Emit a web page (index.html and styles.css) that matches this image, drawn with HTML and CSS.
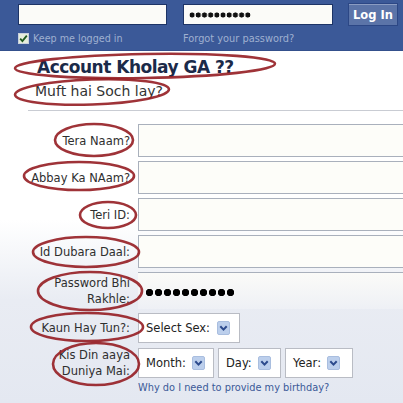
FILE: index.html
```html
<!DOCTYPE html>
<html>
<head>
<meta charset="utf-8">
<link rel="stylesheet" href="styles.css">
</head>
<body>
<div class="page">
  <header class="topbar">
    <div class="login-grid">
      <div class="box email"></div>
      <div class="box pass"><span class="dots dots-sm"></span></div>
      <button class="login-btn">Log In</button>
      <label class="keep"><span class="check"><svg width="11" height="11" viewBox="0 0 11 11"><rect x="0.5" y="0.5" width="10" height="10" fill="#e6eedc" stroke="#c8d0dc"/><path d="M2.2 5.6 L4.4 8 L8.8 2.6" fill="none" stroke="#1f5a1f" stroke-width="1.8"/></svg></span>Keep me logged in</label>
      <a class="forgot">Forgot your password?</a>
    </div>
  </header>
  <main class="signup">
    <h1 class="title">Account Kholay GA ??</h1>
    <p class="subtitle">Muft hai Soch lay?</p>
    <div class="form">
      <div class="lbl">Tera Naam?</div><div class="inp"></div>
      <div class="lbl">Abbay Ka NAam?</div><div class="inp"></div>
      <div class="lbl">Teri ID:</div><div class="inp"></div>
      <div class="lbl">Id Dubara Daal:</div><div class="inp"></div>
      <div class="lbl two">Password Bhi<br>Rakhle:</div><div class="pwd"><span class="dots dots-lg"></span></div>
      <div class="lbl">Kaun Hay Tun?:</div>
      <div class="sels"><div class="sel sex">Select Sex: <span class="arr"><svg width="13" height="14" viewBox="0 0 13 14"><rect x="0.5" y="0.5" width="12" height="13" rx="1.5" fill="#bccfec" stroke="#a9bedf"/><path d="M3.3 5.2 L6.5 8.6 L9.7 5.2" fill="none" stroke="#2c4a8c" stroke-width="2"/></svg></span></div></div>
      <div class="lbl two">Kis Din aaya<br>Duniya Mai:</div>
      <div class="sels">
        <div class="sel month">Month: <span class="arr"><svg width="13" height="14" viewBox="0 0 13 14"><rect x="0.5" y="0.5" width="12" height="13" rx="1.5" fill="#bccfec" stroke="#a9bedf"/><path d="M3.3 5.2 L6.5 8.6 L9.7 5.2" fill="none" stroke="#2c4a8c" stroke-width="2"/></svg></span></div>
        <div class="sel day">Day: <span class="arr"><svg width="13" height="14" viewBox="0 0 13 14"><rect x="0.5" y="0.5" width="12" height="13" rx="1.5" fill="#bccfec" stroke="#a9bedf"/><path d="M3.3 5.2 L6.5 8.6 L9.7 5.2" fill="none" stroke="#2c4a8c" stroke-width="2"/></svg></span></div>
        <div class="sel year">Year: <span class="arr"><svg width="13" height="14" viewBox="0 0 13 14"><rect x="0.5" y="0.5" width="12" height="13" rx="1.5" fill="#bccfec" stroke="#a9bedf"/><path d="M3.3 5.2 L6.5 8.6 L9.7 5.2" fill="none" stroke="#2c4a8c" stroke-width="2"/></svg></span></div>
      </div>
      <div></div><a class="why">Why do I need to provide my birthday?</a>
    </div>
  </main>
  <svg class="marks" width="403" height="403" viewBox="0 0 403 403">
    <g fill="none" stroke="#951d22" stroke-width="2.6" stroke-opacity="0.9">
      <ellipse cx="145" cy="66" rx="130" ry="12" transform="rotate(-1 145 66)"/>
      <ellipse cx="92" cy="92" rx="77" ry="12.5" transform="rotate(-2 92 92)"/>
      <ellipse cx="94" cy="140" rx="39" ry="16"/>
      <ellipse cx="79" cy="176" rx="55" ry="14"/>
      <ellipse cx="108" cy="215" rx="28" ry="13"/>
      <ellipse cx="86" cy="252" rx="53" ry="15"/>
      <ellipse cx="90" cy="291" rx="52" ry="19"/>
      <ellipse cx="87" cy="327" rx="56" ry="14"/>
      <ellipse cx="96" cy="364" rx="43" ry="21"/>
    </g>
  </svg>
</div>
</body>
</html>
```

FILE: styles.css
```css
* { box-sizing: border-box; }
html, body { margin: 0; padding: 0; }
body { width: 403px; height: 403px; overflow: hidden; font-family: "DejaVu Sans", Verdana, sans-serif; }
.page { position: relative; width: 403px; height: 403px; overflow: hidden; background: linear-gradient(#ffffff 0, #ffffff 220px, #e9ecf3 300px, #e4e8f1 403px); }

.topbar { height: 51px; background: #3b5998; padding: 3px 0 0 18px; border-bottom: 1px solid #34508c; }
.login-grid { display: grid; grid-template-columns: 149px 150px 50px; column-gap: 16px; row-gap: 7px; align-items: center; }
.box { height: 21px; background: #fbfbf8; border: 1px solid #1d3466; display: flex; align-items: center; padding-left: 5px; }
.login-btn { margin-left: -1px; height: 23px; width: 50px; padding: 0; background: #5b74a8; border: 1px solid #2c4785; color: #fff; font-family: "DejaVu Sans", sans-serif; font-weight: bold; font-size: 11.5px; box-shadow: inset 0 1px 0 #8a9cc2; }
.keep { display: flex; align-items: center; gap: 4px; color: #9fb0d0; font-size: 9.6px; }
.check { display: flex; }
.forgot { color: #9fb0d0; font-size: 9.8px; }

.dots { display: block; background-repeat: repeat-x; }
.dots-sm { width: 62px; height: 6px; background-image: radial-gradient(circle, #111 2.3px, transparent 2.8px); background-size: 6.2px 6px; }
.dots-lg { width: 90px; height: 9px; background-image: radial-gradient(circle, #000 3.4px, transparent 4px); background-size: 9px 9px; }

.signup { padding-top: 4px; }
.title { margin: 0 0 0 37px; font-size: 17px; line-height: 24px; font-weight: bold; color: #1b2a49; letter-spacing: -0.5px; }
.subtitle { margin: 1px 0 0 28px; font-size: 14px; line-height: 22px; color: #333; padding: 0 0 8px 7px; border-bottom: 1px solid #c9ccd3; }

.form { display: grid; grid-template-columns: 130px 1fr; column-gap: 8px; row-gap: 4px; margin-top: 13px; align-items: center; }
.lbl { text-align: right; font-size: 11.5px; color: #2f2f2f; line-height: 16px; }
.inp { height: 33px; width: 280px; background: #fdfdf9; border: 1px solid #a9b0bc; }
.pwd { height: 37px; width: 280px; border-top: 1px solid #a9b0bc; background: linear-gradient(#fbfbf8, #eef0f5); padding: 15px 0 0 7px; }
.sels { display: flex; gap: 4px; }
.sel { height: 30px; display: flex; align-items: center; gap: 6px; padding: 0 7px; background: #fff; border: 1px solid #b9bcc4; font-size: 11.5px; color: #222; white-space: nowrap; }
.sex { width: 102px; justify-content: space-between; padding-right: 9px; }
.month { width: 76px; }
.day { width: 63px; }
.year { width: 68px; }
.arr { display: flex; }
.why { font-size: 9.8px; color: #3b5998; margin-top: -1px; }

.marks { position: absolute; left: 0; top: 0; pointer-events: none; }
```
